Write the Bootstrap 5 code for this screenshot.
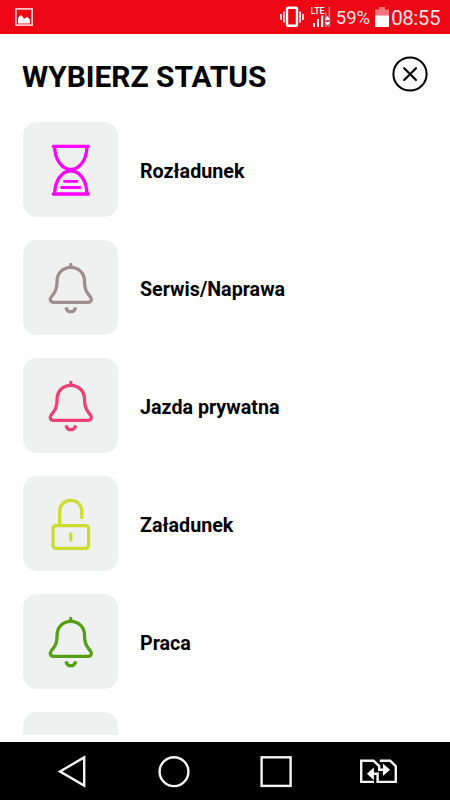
<!DOCTYPE html>
<html lang="pl">
<head>
<meta charset="utf-8">
<meta name="viewport" content="width=device-width, initial-scale=1">
<title>Wybierz status</title>
<link href="https://cdn.jsdelivr.net/npm/bootstrap@5.3.0/dist/css/bootstrap.min.css" rel="stylesheet">
<style>
  body { font-family: Roboto, "Liberation Sans", sans-serif; color: #000; }
  .screen { width: 450px; height: 800px; }
  .statusbar { height: 33.5px; background: #ed0714; color: #fde3e5; font-size: 18.5px; padding: 1px 10px 0 15px; }
  .clock { font-size: 20.5px; letter-spacing: -.45px; padding-top: 2px; margin-left: 2px; }
  .battery-level { padding-top: 3px; margin-left: 5px; margin-right: 5px; }
  .signal { margin-left: 7px; }
  .heading-row { height: 88.5px; padding: 0 22px; }
  .heading-row h1 { font-size: 29.9px; line-height: 36px; padding-top: 25px; }
  .close-btn { width: 36px; height: 36px; margin-top: 22px; }
  .status-list { height: 612.5px; padding-left: 22.7px; gap: 22.7px; }
  .status-item { gap: 22px; font-size: 19.7px; line-height: 24px; }
  .status-item span { padding-top: 4px; }
  .tile { width: 95.3px; height: 95.3px; border-radius: 14px; background: #eff1f1; }
  .tile svg, .navbar-keys svg, .statusbar svg, .close-btn svg { display: block; }
  .tile svg { fill: none; stroke: currentColor; stroke-width: 3.3; stroke-linecap: round; stroke-linejoin: round; }
  .c-magenta { color: #ff00ff; }
  .c-taupe { color: #a18d8d; }
  .c-pink { color: #f23e74; }
  .c-lime { color: #cddc2e; }
  .c-green { color: #549f12; }
  .navbar-keys { height: 58px; background: #000; }
</style>
</head>
<body class="bg-white m-0">
<svg class="d-none" xmlns="http://www.w3.org/2000/svg">
  <symbol id="bell" viewBox="0.4 0 95.3 95.3">
    <path d="M48.2 24.5V27M48.2 27.3C40 27.3 34.5 33.5 34.5 41C34.5 47 33.7 50.5 31 53.8L28.6 56.9C26.8 59.4 27.9 62.3 30.9 62.3H65.5C68.5 62.3 69.6 59.4 67.8 56.9L65.4 53.8C62.7 50.5 61.9 47 61.9 41C61.9 33.5 56.4 27.3 48.2 27.3Z"/>
    <path d="M43.4 67.3C44.6 73.2 51.8 73.2 53 67.3" stroke-linecap="butt"/>
  </symbol>
  <symbol id="hourglass" viewBox="0.4 0 95.3 95.3">
    <path d="M30.7 24.4H65.7M30.7 72H65.7M32.1 24.4C32.1 37 39 47.5 48.2 47.5S64.3 37 64.3 24.4M32.1 72C32.1 59 39 48.8 48.2 48.8S64.3 59 64.3 72"/>
    <path d="M41.8 59.3H54.4M38.9 65.5H57.4" stroke-width="2.8"/>
  </symbol>
  <symbol id="unlock" viewBox="0.2 0 95.3 95.3">
    <rect x="30.3" y="49.7" width="35.5" height="22.7" rx="2.8"/>
    <path d="M36.9 49.2V35.5C36.9 20.8 59 20.8 59 35.5V41.5M48 58V64"/>
  </symbol>
</svg>

<div class="screen d-flex flex-column overflow-hidden">
  <header class="statusbar d-flex align-items-center flex-shrink-0">
    <svg width="18" height="18" viewBox="0 0 18 18"><rect x=".9" y=".9" width="16.2" height="16.2" fill="none" stroke="#fbd9db" stroke-width="1.6"/><path fill="#fff" d="M3 15.5V10.3L4.5 8L6.2 7.3L7.8 9L9.2 10.8L11.5 9.3H12.8L15 11.8V15.5Z"/></svg>
    <svg class="ms-auto" width="24" height="22" viewBox="0 0 24 22"><rect x="7" y="1.8" width="10" height="18" rx="1" fill="none" stroke="#fff" stroke-width="2.4"/><path stroke="#fff" stroke-width="1.6" d="M3.9 5.5V16.5M1 8V14M20.1 5.5V16.5M23 8V14"/></svg>
    <svg class="signal" width="20" height="22" viewBox="0 0 20 22"><text x="-.5" y="7.5" font-size="8.8" font-weight="500" textLength="14" lengthAdjust="spacingAndGlyphs" fill="#fff">LTE</text><path fill="#fff" d="M2 17h2v4H2zM6 13h2v8H6zM10 9.5h2.2v11.5H10z"/><path fill="#f47880" d="M14 6h1.5v15H14zM17.6 1h1.5v20h-1.5z"/><path fill="#777" d="M13.5 9.5h6v11h-6z" opacity=".45"/><path fill="#fff" d="M13.8 13.8L16.5 10L19.2 13.8ZM13.8 16L16.5 19.8L19.2 16Z"/></svg>
    <span class="battery-level">59%</span>
    <svg width="14" height="20" viewBox="0 0 14 20"><path fill="#f6717a" d="M0 2.5H4V0H10V2.5H14V9H0Z"/><path fill="#fff" d="M0 8.5H14V20H0Z"/></svg>
    <span class="clock">08:55</span>
  </header>

  <div class="heading-row d-flex justify-content-between flex-shrink-0">
    <h1 class="fw-bold m-0 text-nowrap">WYBIERZ STATUS</h1>
    <button type="button" class="close-btn btn border-0 p-0" aria-label="Zamknij">
      <svg width="36" height="36" viewBox="0 0 36 36" fill="none" stroke="#000" stroke-width="2"><circle cx="18" cy="18" r="16.6"/><path d="M12.2 12.2L24 24M24 12.2L12.2 24" stroke-linecap="round" stroke-width="2.2"/></svg>
    </button>
  </div>

  <main class="status-list d-flex flex-column overflow-hidden flex-shrink-0">
    <div class="status-item d-flex align-items-center fw-bold flex-shrink-0"><div class="tile c-magenta"><svg width="95.3" height="95.3"><use href="#hourglass"/></svg></div><span>Rozładunek</span></div>
    <div class="status-item d-flex align-items-center fw-bold flex-shrink-0"><div class="tile c-taupe"><svg width="95.3" height="95.3"><use href="#bell"/></svg></div><span>Serwis/Naprawa</span></div>
    <div class="status-item d-flex align-items-center fw-bold flex-shrink-0"><div class="tile c-pink"><svg width="95.3" height="95.3"><use href="#bell"/></svg></div><span>Jazda prywatna</span></div>
    <div class="status-item d-flex align-items-center fw-bold flex-shrink-0"><div class="tile c-lime"><svg width="95.3" height="95.3"><use href="#unlock"/></svg></div><span>Załadunek</span></div>
    <div class="status-item d-flex align-items-center fw-bold flex-shrink-0"><div class="tile c-green"><svg width="95.3" height="95.3"><use href="#bell"/></svg></div><span>Praca</span></div>
    <div class="status-item d-flex align-items-center flex-shrink-0"><div class="tile"></div></div>
  </main>

  <nav class="navbar-keys mt-auto flex-shrink-0">
    <svg width="450" height="58" viewBox="0 0 450 58" fill="none" stroke="#f4f4f4" stroke-width="2.4">
      <path d="M60 29.5L84.2 15.4V43.6Z"/>
      <circle cx="174" cy="29.7" r="14.4"/>
      <rect x="261.6" y="15.3" width="29" height="28.6"/>
      <path d="M374 39.9H361.2V18.8H373.6L379.2 24V27.8H386.5M379.8 18.8H390.2L395.8 24.2V39.9H377.6V31.8H370"/>
      <path fill="#fff" stroke-width="1.4" d="M383.6 23L389 27.8L383.6 32.4ZM373.2 27L368 31.8L373.2 36.6Z"/>
    </svg>
  </nav>
</div>
<script src="https://cdn.jsdelivr.net/npm/bootstrap@5.3.0/dist/js/bootstrap.bundle.min.js"></script>
</body>
</html>
